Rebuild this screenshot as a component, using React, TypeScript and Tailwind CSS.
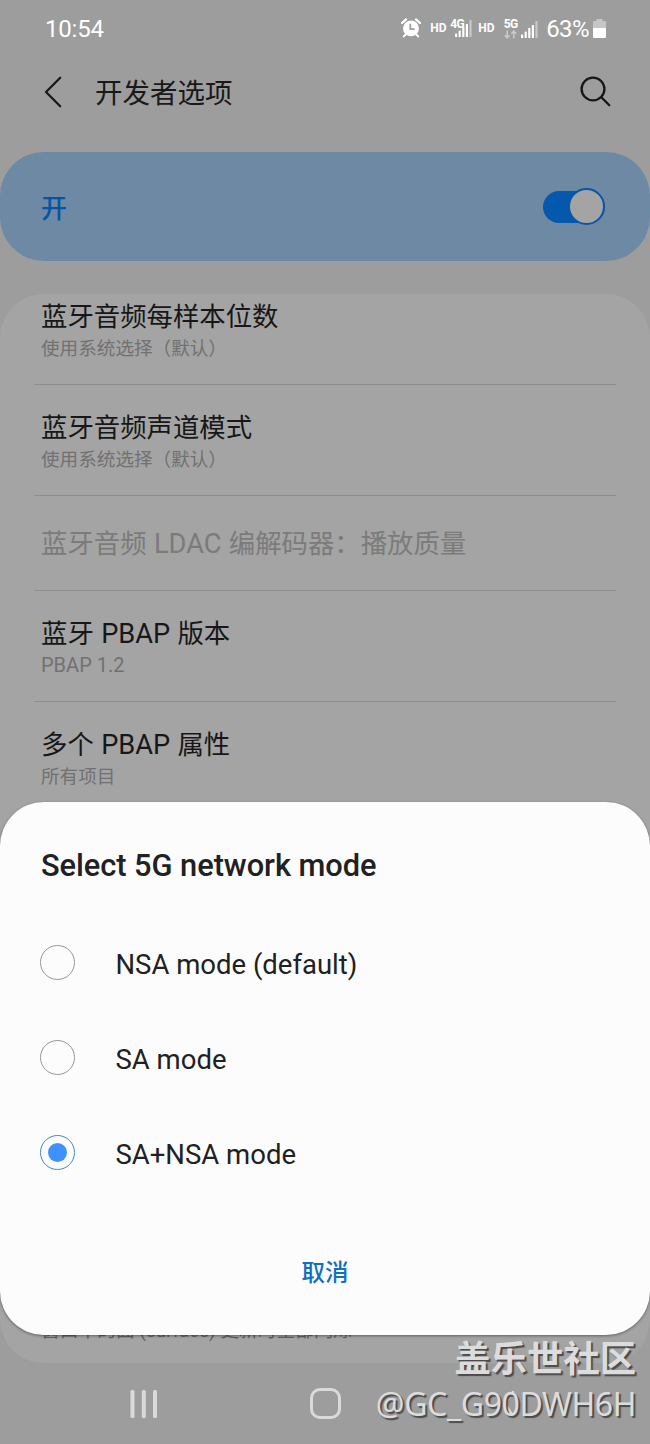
import React from 'react';

interface Setting {
    title: string;
    summary?: string;
    disabled?: boolean;
}

const settings: Setting[] = [
    { title: '蓝牙音频每样本位数', summary: '使用系统选择（默认）' },
    { title: '蓝牙音频声道模式', summary: '使用系统选择（默认）' },
    { title: '蓝牙音频 LDAC 编解码器：播放质量', disabled: true },
    { title: '蓝牙 PBAP 版本', summary: 'PBAP 1.2' },
    { title: '多个 PBAP 属性', summary: '所有项目' },
];

const modes = ['NSA mode (default)', 'SA mode', 'SA+NSA mode'];

const SignalBars: React.FC = () => (
    <svg width="17" height="17" viewBox="0 0 17 17" fill="#fff">
        <rect x="0" y="13.5" width="2.2" height="3.5" rx="0.6" />
        <rect x="3.6" y="10.5" width="2.2" height="6.5" rx="0.6" />
        <rect x="7.2" y="7" width="2.2" height="10" rx="0.6" />
        <rect x="10.8" y="4" width="2.2" height="13" rx="0.6" />
        <rect x="14.4" y="0" width="2.2" height="17" rx="0.6" opacity="0.45" />
    </svg>
);

const StatusBar: React.FC = () => (
    <div className="flex h-[58px] shrink-0 items-center pl-[45px] pr-[44px] text-white">
        <span className="text-[24px] leading-none tracking-[-0.2px]">10:54</span>
        <div className="ml-auto flex items-center">
            <svg width="20" height="20" viewBox="0 0 20 20" fill="none" className="mr-[9px] -mt-[3px]">
                <circle cx="10" cy="10.4" r="7.9" fill="#fff" />
                <path d="M1 5 5 1.4M19 5 15 1.4" stroke="#fff" strokeWidth="2.3" strokeLinecap="round" />
                <path d="M5 16 2.8 18.4M15 16l2.2 2.4" stroke="#fff" strokeWidth="2" strokeLinecap="round" />
                <path d="M9.3 5.8v5.3h4.4" stroke="#9d9d9d" strokeWidth="1.7" />
            </svg>
            <span className="-mt-[2px] w-[18px] text-[12px] font-bold leading-none">HD</span>
            <div className="relative ml-[5px] h-[20px] w-[20px]">
                <div className="absolute left-[2px] top-px"><SignalBars /></div>
                <span className="absolute -left-[3px] -top-px text-[12px] font-bold leading-none tracking-[-0.5px]">4G</span>
            </div>
            <span className="-mt-[2px] ml-[5px] w-[18px] text-[12px] font-bold leading-none">HD</span>
            <div className="-mt-px ml-[7px] flex w-[15px] flex-col items-center">
                <span className="text-[12px] font-bold leading-[10px] tracking-[-0.5px]">5G</span>
                <svg width="13" height="9" viewBox="0 0 13 9" fill="none" stroke="#cbcbcb" strokeWidth="1.5" className="mt-px">
                    <path d="M3.2 0.5v7M0.8 5.2l2.4 2.6 2.4-2.6M9.8 8.5v-7M7.4 3.8l2.4-2.6 2.4 2.6" />
                </svg>
            </div>
            <div className="ml-[3px]"><SignalBars /></div>
            <span className="ml-[8px] text-[24px] leading-none tracking-[-0.6px]">63%</span>
            <svg width="13" height="19" viewBox="0 0 13 19" className="-mt-[2px] ml-[4px]">
                <path d="M3.5 0h6v2H12a1 1 0 0 1 1 1v6H0V3a1 1 0 0 1 1-1h2.5z" fill="#c6c6c6" />
                <path d="M0 9h13v9a1 1 0 0 1-1 1H1a1 1 0 0 1-1-1z" fill="#fff" />
            </svg>
        </div>
    </div>
);

const Header: React.FC = () => (
    <div className="flex h-[67px] shrink-0 items-center pl-[44px] pr-[39px]">
        <svg width="19" height="32" viewBox="0 0 19 32" fill="none" stroke="#191919" strokeWidth="2.3" strokeLinecap="round" strokeLinejoin="round">
            <path d="M16.2 1.7 2 16l14.2 14.3" />
        </svg>
        <h1 className="ml-[32px] pt-[5px] text-[27.5px] leading-[40px] text-[#191919]">开发者选项</h1>
        <svg width="31" height="31" viewBox="0 0 31 31" fill="none" stroke="#161616" strokeWidth="2.3" strokeLinecap="round" className="ml-auto">
            <circle cx="13" cy="13" r="11.4" />
            <path d="m21.3 21.3 8 8" />
        </svg>
    </div>
);

const MasterSwitch: React.FC = () => (
    <div className="mt-[27px] flex h-[109px] shrink-0 items-center justify-between rounded-[44px] bg-[#6d89a4] pl-[41px] pr-[45px]">
        <span className="pt-[4px] text-[26px] font-medium leading-none text-[#0754a3]">开</span>
        <div className="flex h-[32px] w-[62px] items-center justify-end rounded-full bg-[#0558ac]">
            <div className="size-[37px] shrink-0 rounded-full border-2 border-[#0b57a3] bg-[#a4a4a4]" />
        </div>
    </div>
);

const SettingRow: React.FC<{ item: Setting; first: boolean; last: boolean }> = ({ item, first, last }) => (
    <div className={`mx-[34px] px-[7px] ${last ? '' : 'border-b border-[#8f8f8f]'} ${first ? 'h-[91px] pt-[5px]' : item.summary ? 'h-[111px] pt-[25px]' : 'h-[95px] pt-[30px]'}`}>
        <div className={`text-[26.4px] leading-[36px] [word-spacing:0.8px] ${item.disabled ? 'text-[#7b7b7b]' : 'text-[#171717]'}`}>
            {/* latin acronyms run slightly wider than the CJK around them */}
            {item.title.split(/([A-Z]+)/).map((part, idx) => (
                <span key={idx} className={idx % 2 ? 'text-[27.2px] leading-none' : ''}>{part}</span>
            ))}
        </div>
        {item.summary && (
            <div className={`leading-[28px] text-[#717171] ${item.summary.startsWith('PBAP') ? '-mt-px text-[20px]' : 'text-[18.6px]'}`}>{item.summary}</div>
        )}
    </div>
);

const NavBar: React.FC = () => (
    <div className="flex h-[81px] shrink-0 items-center pl-[130px]">
        <svg width="28" height="28" viewBox="0 0 28 28" fill="#dadada">
            <rect x="0.5" y="0" width="4" height="28" rx="1.5" />
            <rect x="11.8" y="0" width="4" height="28" rx="1.5" />
            <rect x="23" y="0" width="4" height="28" rx="1.5" />
        </svg>
        <div className="ml-[152px] size-[31px] rounded-[10px] border-[3.5px] border-[#dadada]" />
        <svg width="16" height="28" viewBox="0 0 16 28" fill="none" stroke="#dadada" strokeWidth="2.5" strokeLinecap="round" className="ml-[160px]">
            <path d="M12 2 4 14l8 12" />
        </svg>
    </div>
);

const NetworkDialog: React.FC = () => {
    const [selected, setSelected] = React.useState('SA+NSA mode');

    return (
        <div role="dialog" className="absolute left-0 top-[802px] flex h-[533px] w-full flex-col rounded-[44px] bg-[#fcfcfc] shadow-[0_1px_3px_rgba(0,0,0,0.4)]">
            <h2 className="ml-[41px] mt-[44px] text-[30.8px] font-medium leading-[40px] tracking-[-0.05px] text-[#212121]">Select 5G network mode</h2>
            <div className="mt-[29px] flex flex-col">
                {modes.map((mode) => (
                    <button key={mode} onClick={() => setSelected(mode)} className="flex h-[95px] items-center pl-[40px] text-left">
                        <span className={`flex size-[35px] items-center justify-center rounded-full border-[1.5px] ${selected === mode ? 'border-[#4584d2]' : 'border-[#979797]'}`}>
                            {selected === mode && <span className="size-[19px] rounded-full bg-[#3e91ff]" />}
                        </span>
                        <span className="ml-[40.5px] pt-[4px] text-[27.5px] leading-[36px] text-[#212121]">{mode}</span>
                    </button>
                ))}
            </div>
            <button className="mx-auto mt-[55px] text-[23.5px] font-medium leading-[36px] text-[#0f6fc0]">取消</button>
        </div>
    );
};

export default function App() {
    return (
        <div className="relative flex h-[1444px] w-[650px] flex-col overflow-hidden bg-[#9d9d9d] font-[Roboto,'Noto_Sans_CJK_SC',sans-serif]">
            <StatusBar />
            <Header />
            <MasterSwitch />
            <div className="mt-[33px] flex min-h-0 flex-1 flex-col rounded-[44px] bg-[#a4a4a4]">
                {settings.map((item, idx) => (
                    <SettingRow key={item.title} item={item} first={idx === 0} last={idx === settings.length - 1} />
                ))}
                <div className="mb-[18px] ml-[41px] mt-auto text-[18.8px] leading-[28px] text-[#616161]">窗口中的面 (surface) 更新时全部闪烁</div>
            </div>
            <NavBar />
            <NetworkDialog />

            {/* Community watermark */}
            <div className="absolute bottom-[18px] right-[14px] flex flex-col items-end whitespace-nowrap text-[#dcdcdc] [text-shadow:2px_2px_1px_#4b4b4b]">
                <span className="font-['Noto_Sans_CJK_SC',sans-serif] text-[36.3px] font-bold leading-[52px]">盖乐世社区</span>
                <span className="font-['Noto_Sans',sans-serif] text-[32px] leading-[44px] tracking-[-0.4px]">@GC_G90DWH6H</span>
            </div>
        </div>
    );
}
